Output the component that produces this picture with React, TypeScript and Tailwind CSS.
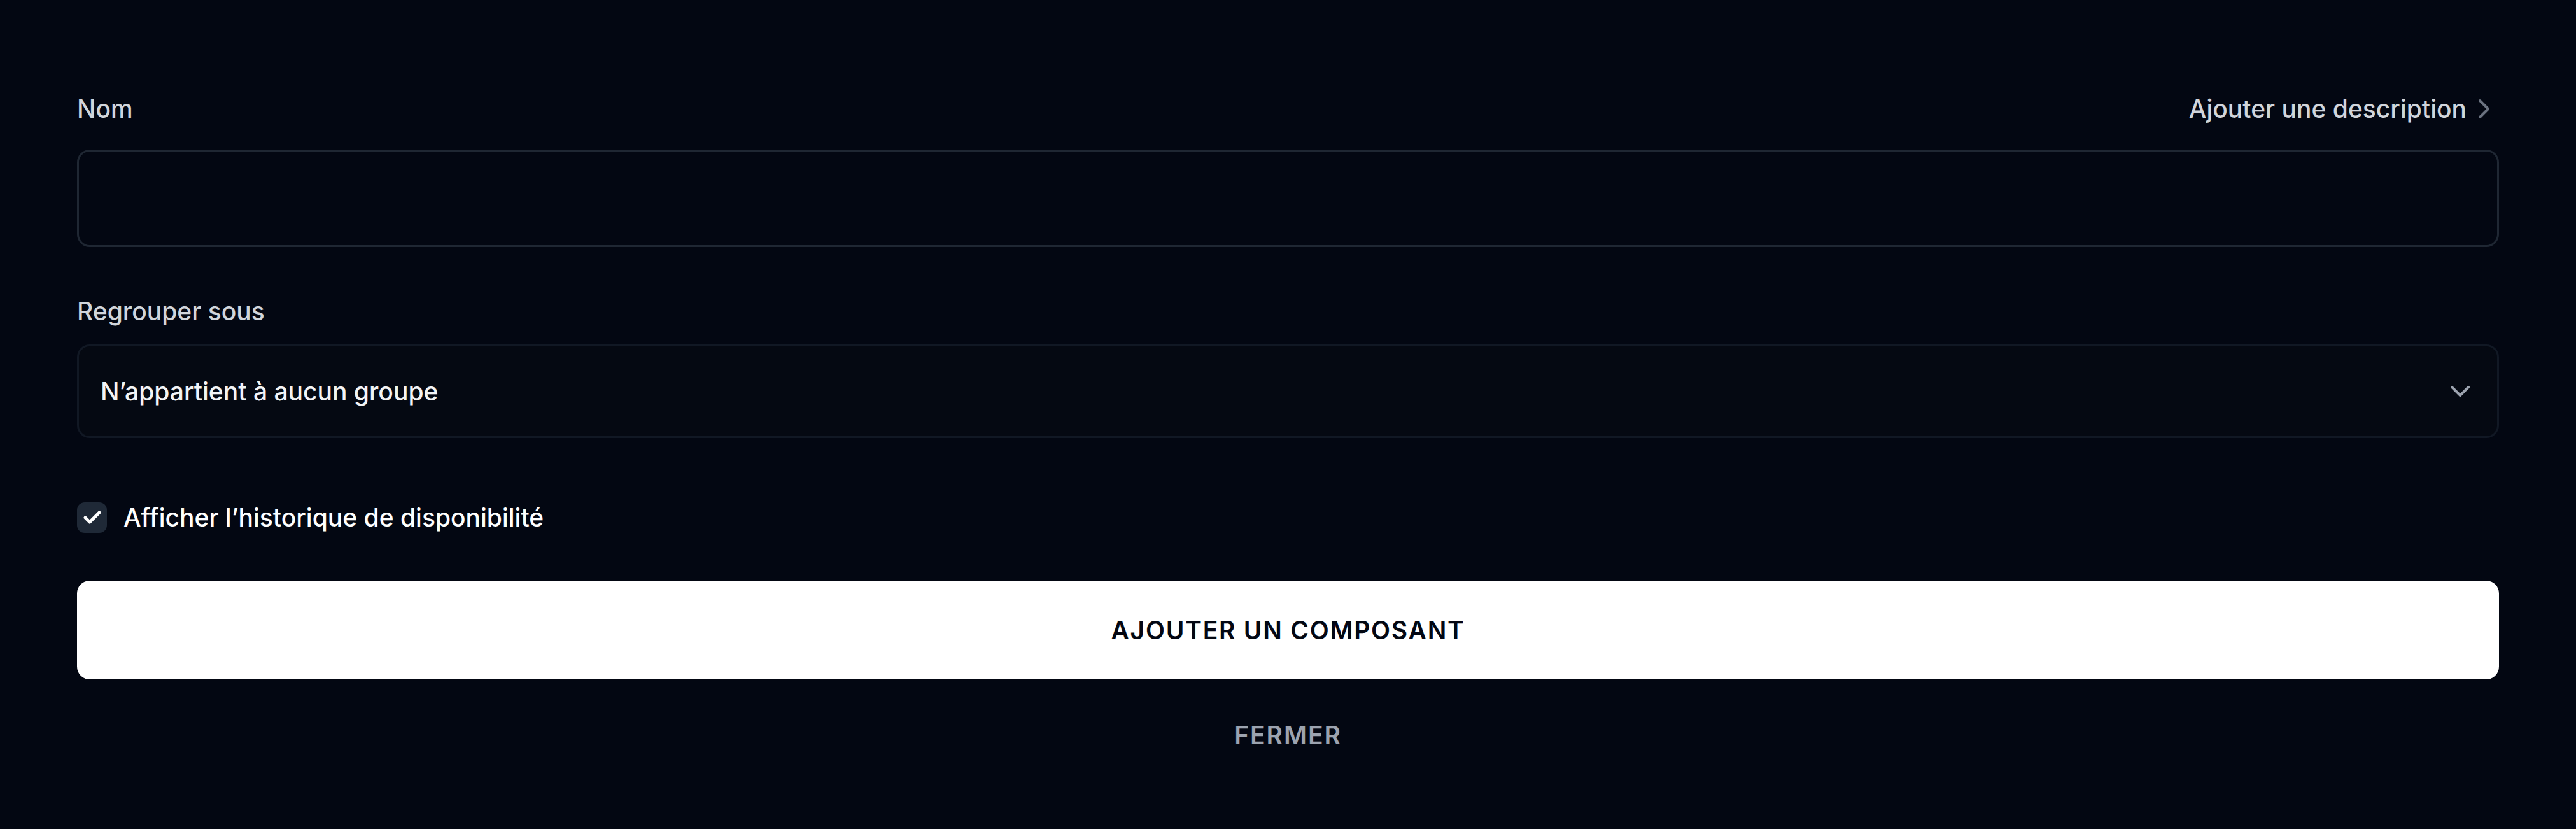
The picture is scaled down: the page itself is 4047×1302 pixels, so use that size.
import React from 'react';

const ChevronRight = () => (
  <svg width="19" height="32" viewBox="0 0 19 32" fill="none" className="text-[#6b7280]">
    <polyline points="3,3 16,16 3,29" stroke="currentColor" strokeWidth="4" strokeLinecap="round" strokeLinejoin="round" />
  </svg>
);

const ChevronDown = () => (
  <svg width="30" height="18" viewBox="0 0 30 18" fill="none" className="text-[#9ca3af]">
    <polyline points="2,2 15,15 28,2" stroke="currentColor" strokeWidth="4" strokeLinecap="round" strokeLinejoin="round" />
  </svg>
);

const Check = () => (
  <svg width="28" height="22" viewBox="0 0 28 22" fill="none" className="text-white">
    <polyline points="3,11 10,18 25,3" stroke="currentColor" strokeWidth="5" strokeLinecap="round" strokeLinejoin="round" />
  </svg>
);

export default function App() {
  return (
    <div className="min-h-screen bg-[#030712] px-[121px] pt-[141px] font-['Inter',sans-serif] text-[39px] leading-[60px]">
      {/* Nom */}
      <div className="flex h-[60px] items-center justify-between">
        <span className="font-medium text-[#d1d5db]">Nom</span>
        <button className="flex items-center gap-[18px] pr-[14px] font-medium text-[#d1d5db]">
          <span>Ajouter une description</span>
          <ChevronRight />
        </button>
      </div>
      <div className="mt-[34px] h-[153px] rounded-[20px] border-[3px] border-[#1f2733]" />

      {/* Regrouper sous */}
      <div className="mt-[71px] h-[60px] font-medium text-[#d1d5db]">Regrouper sous</div>
      <div className="mt-[22px] flex h-[147px] items-center justify-between rounded-[20px] border-[3px] border-[#111824] bg-[#050912] pl-[34px] pr-[43px]">
        <span className="font-medium text-[#f3f4f6]">N’appartient à aucun groupe</span>
        <ChevronDown />
      </div>

      {/* Checkbox */}
      <div className="mt-[95px] flex h-[60px] items-center gap-[26px]">
        <div className="flex h-[48px] w-[47px] items-center justify-center rounded-[12px] bg-[#1f2937]">
          <Check />
        </div>
        <span className="font-medium text-white">Afficher l’historique de disponibilité</span>
      </div>

      {/* Actions */}
      <button className="mt-[69px] flex h-[155px] w-full items-center justify-center rounded-[20px] bg-white text-[39px] font-semibold uppercase tracking-[0.045em] text-[#030712]">
        Ajouter un composant
      </button>
      <div className="mt-[58px] flex h-[60px] justify-center">
        <button className="font-semibold uppercase tracking-[0.05em] text-[#9ca3af]">Fermer</button>
      </div>
    </div>
  );
}
